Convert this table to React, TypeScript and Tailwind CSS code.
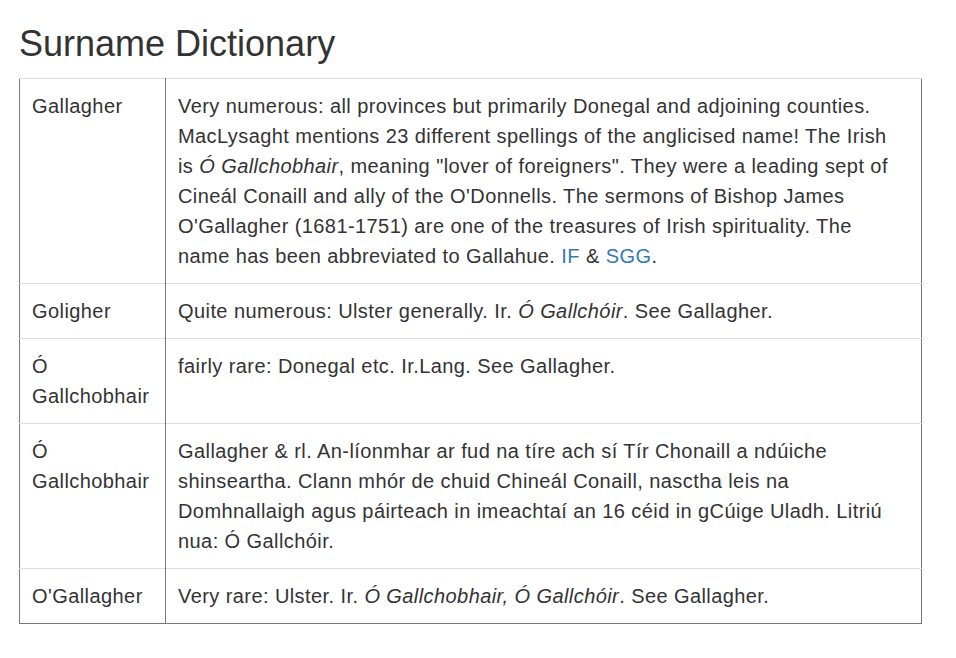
const ROWS: { name: React.ReactNode; body: React.ReactNode }[] = [
  {
    name: "Gallagher",
    body: (
      <>
        Very numerous: all provinces but primarily Donegal and adjoining counties. MacLysaght
        mentions 23 different spellings of the anglicised name! The Irish is <i>Ó Gallchobhair</i>,
        meaning "lover of foreigners". They were a leading sept of Cineál Conaill and ally of the
        O'Donnells. The sermons of Bishop James O'Gallagher (1681-1751) are one of the treasures of
        Irish spirituality. The name has been abbreviated to Gallahue.{" "}
        <a href="#" className="text-[#337ab7]">IF</a> &amp;{" "}
        <a href="#" className="text-[#337ab7]">SGG</a>.
      </>
    ),
  },
  {
    name: "Goligher",
    body: (
      <>
        Quite numerous: Ulster generally. Ir. <i>Ó Gallchóir</i>. See Gallagher.
      </>
    ),
  },
  {
    name: "Ó Gallchobhair",
    body: "fairly rare: Donegal etc. Ir.Lang. See Gallagher.",
  },
  {
    name: "Ó Gallchobhair",
    body: "Gallagher & rl. An-líonmhar ar fud na tíre ach sí Tír Chonaill a ndúiche shinseartha. Clann mhór de chuid Chineál Conaill, nasctha leis na Domhnallaigh agus páirteach in imeachtaí an 16 céid in gCúige Uladh. Litriú nua: Ó Gallchóir.",
  },
  {
    name: "O'Gallagher",
    body: (
      <>
        Very rare: Ulster. Ir. <i>Ó Gallchobhair, Ó Gallchóir</i>. See Gallagher.
      </>
    ),
  },
];

export default function App() {
  return (
    <div
      className="min-h-screen bg-white px-[19px] pt-[24px] text-[#333]"
      style={{ fontFamily: '"Liberation Sans", Arial, sans-serif' }}
    >
      <h2 className="mb-[14px] text-[36px] leading-[1.1] font-normal">Surname Dictionary</h2>
      <table className="w-[903px] table-fixed border-collapse border-x border-b border-[#777] text-[20px] leading-[30px] tracking-[0.42px]">
        <colgroup>
          <col className="w-[146px]" />
          <col />
        </colgroup>
        <tbody>
          {ROWS.map((row, i) => (
            <tr key={i} className="border-t border-[#ddd]">
              <td className="border-r border-[#777] px-[12px] py-[12px] align-top">{row.name}</td>
              <td className="py-[12px] pr-[20px] pl-[12px] align-top">{row.body}</td>
            </tr>
          ))}
        </tbody>
      </table>
    </div>
  );
}
